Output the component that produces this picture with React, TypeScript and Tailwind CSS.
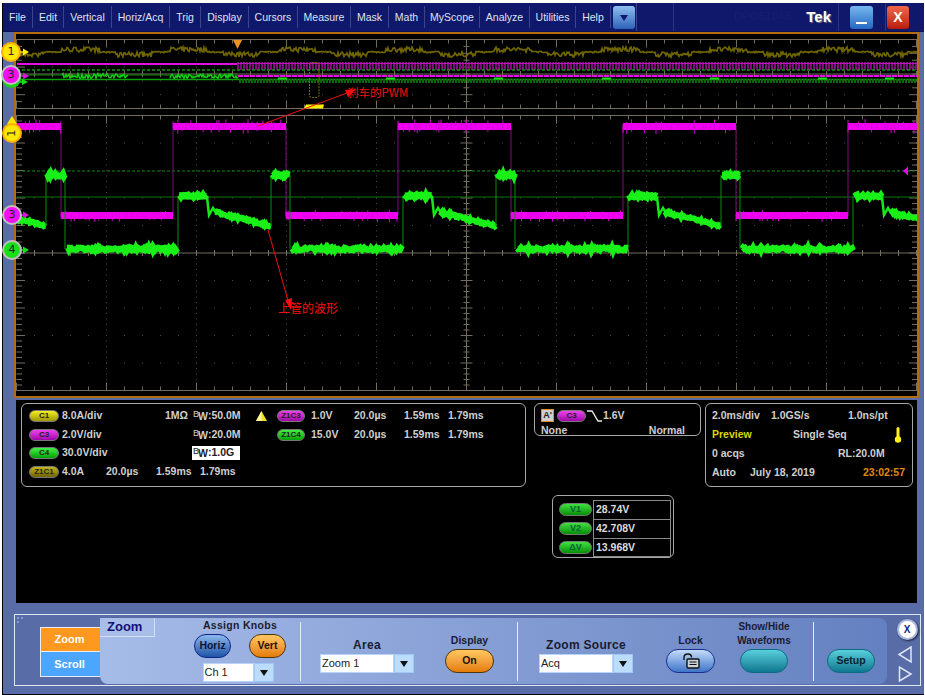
import React from 'react';

let seed = 7;
const rnd = () => {
  seed = (seed * 16807) % 2147483647;
  return seed / 2147483647;
};

const menuItems = [
  { label: 'File', w: 'w-[30px]' },
  { label: 'Edit', w: 'w-[31px]' },
  { label: 'Vertical', w: 'w-[48px]' },
  { label: 'Horiz/Acq', w: 'w-[58px]' },
  { label: 'Trig', w: 'w-[31px]' },
  { label: 'Display', w: 'w-[48px]' },
  { label: 'Cursors', w: 'w-[49px]' },
  { label: 'Measure', w: 'w-[53px]' },
  { label: 'Mask', w: 'w-[38px]' },
  { label: 'Math', w: 'w-[36px]' },
  { label: 'MyScope', w: 'w-[55px]' },
  { label: 'Analyze', w: 'w-[50px]' },
  { label: 'Utilities', w: 'w-[46px]' },
  { label: 'Help', w: 'w-[35px]' },
];

function range(from: number, to: number, step: number): number[] {
  const out: number[] = [];
  for (let v = from; v <= to + 0.01; v += step) out.push(v);
  return out;
}

// one graticule: frame lines, edge ticks, centre ticks, dots
function graticule(top: number, bottom: number, sub: number, every: number) {
  const cy = (top + bottom) / 2;
  const cx = 466.5;
  let d = `M17 ${top}H917M17 ${bottom}H917M17 ${cy}H917M${cx} ${top}V${bottom}`;
  let dots = '';
  const rows = range(top, bottom, sub * every).slice(1, -1);
  range(16.5, 917, 18).forEach((x, i) => {
    const major = i % 5 === 0;
    const len = major ? 8 : 4;
    d += `M${x} ${top}v${len}M${x} ${bottom}v-${len}`;
    d += `M${x} ${cy - 3}v6`;
    rows.forEach((y) => {
      dots += `M${x} ${y - 0.5}v1`;
    });
    if (major) range(top, bottom, sub).forEach((y) => (dots += `M${x} ${y - 0.5}v1`));
  });
  range(top, bottom, sub).forEach((y, i) => {
    const major = i % every === 0;
    const len = major ? 8 : 5;
    d += `M17 ${y}h${len}M917 ${y}h-${len}`;
    const half = major ? 6 : 3;
    d += `M${cx - half} ${y}h${half * 2}`;
  });
  return { d, dots };
}

function band(x0: number, y0: number, x1: number, y1: number, amp: number, step = 1): string {
  let d = '';
  const n = Math.round((x1 - x0) / step);
  for (let i = 0; i <= n; i++) {
    const t = i / n;
    const y = y0 + (y1 - y0) * t + (rnd() - 0.5) * amp;
    d += `${i ? 'L' : 'M'}${(x0 + (x1 - x0) * t).toFixed(1)} ${y.toFixed(1)}`;
  }
  return d;
}

function yellowTrace(): string {
  let d = 'M17 52';
  for (let x = 18; x <= 917; x += 1) {
    const p = ((x - 8) % 108 + 108) % 108;
    let y = 52 + (rnd() - 0.5) * 1.2;
    if (p >= 54 && p < 92) y = 52 - rnd() * 5;
    if (p < 36) y = 52 + rnd() * 5;
    d += `L${x.toFixed(1)} ${y.toFixed(1)}`;
  }
  return d;
}

function comb(x0: number, x1: number, y0: number, y1: number, step: number): string {
  return range(x0, x1, step)
    .map((x) => `M${x} ${y0}V${y1}`)
    .join('');
}

function spikes(x0: number, x1: number, y: number, up: number, down: number): string {
  let d = '';
  for (let x = x0; x < x1; x += 2 + rnd() * 5) {
    d += `M${x.toFixed(1)} ${y - rnd() * up}V${y + rnd() * down}`;
  }
  return d;
}

function Waveforms() {
  const main = graticule(115.5, 390.5, 5.5, 5);
  const over = graticule(39.5, 108.5, 6.9, 2);
  const periods = [-225, 0, 225, 450, 675];
  return (
    <svg viewBox="16 34 901 362" className="block w-[901px] h-[362px] bg-black">
      <path d={main.dots} stroke="#4a473c" strokeWidth="1" fill="none" />
      <path d={over.dots} stroke="#4a473c" strokeWidth="1" fill="none" />
      <path d={main.d} stroke="#736d5e" strokeWidth="1" fill="none" />
      <path d={over.d} stroke="#736d5e" strokeWidth="1" fill="none" />

      {/* overview traces */}
      <path d={yellowTrace()} stroke="#6f6500" strokeWidth="1.7" fill="none" />
      <path d="M17 64H238" stroke="#e010e0" strokeWidth="2" />
      <path d={comb(238, 917, 62, 70, 3)} stroke="#7a107a" strokeWidth="2" />
      <path d="M238 63.5H917" stroke="#c010c0" strokeWidth="1" />
      <path d="M17 70H917" stroke="#0a9a0a" strokeWidth="1.5" strokeDasharray="3 2" />
      <path d="M17 75H238" stroke="#0a8a0a" strokeWidth="1" />
      <path d="M238 76H917" stroke="#e010e0" strokeWidth="2" strokeDasharray="5 1" />
      <path d="M17 79.5H917" stroke="#0aa00a" strokeWidth="1.5" />
      <path d={band(62, 76, 128, 76, 5)} stroke="#14d014" strokeWidth="1.4" fill="none" />
      <path d={band(170, 76, 238, 76, 5)} stroke="#14d014" strokeWidth="1.4" fill="none" />
      <path d={comb(240, 917, 79, 83, 3)} stroke="#0a6a0a" strokeWidth="2" />
      {[278, 386, 494, 602, 710, 818, 885].map((x) => (
        <path key={x} d={`M${x} 78.5h9`} stroke="#18e018" strokeWidth="2" />
      ))}

      {/* zoom box and markers */}
      <rect x="309.5" y="62.5" width="9.5" height="35" rx="2" fill="none" stroke="#7a7000" strokeWidth="1" strokeDasharray="2 1" />
      <path d="M306 104.5H324L323 108.5H304Z" fill="#ffee00" />
      <path d="M233 40H242L237.5 49Z" fill="#f09020" />

      {/* reference lines */}
      <path d="M17 171H917" stroke="#0b8a0b" strokeWidth="1" strokeDasharray="3 2" />
      <path d="M17 197H917" stroke="#0a780a" strokeWidth="1.2" />

      {/* main traces */}
      {[-225, 0, 225, 450, 675, 900].map((o) => (
        <g key={o}>
          <path d={`M${o - 52} 126V216M${o + 61} 126V216`} stroke="#7c107c" strokeWidth="1" />
          <rect x={o - 52} y="123" width="113" height="7" fill="#f000f0" />
          <path d={spikes(o - 52, o + 61, 126, 7, 8)} stroke="#d800d8" strokeWidth="1" />
        </g>
      ))}
      {[-225, 0, 225, 450, 675].map((o) => (
        <g key={o}>
          <rect x={o + 61} y="212" width="112" height="7" fill="#f000f0" />
          <path d={spikes(o + 61, o + 173, 216, 6, 6)} stroke="#e000e0" strokeWidth="1" />
        </g>
      ))}
      {periods.map((o) => (
        <g key={o} fill="none">
          <path d={`M${o + 46} 226V175M${o + 65} 175V249M${o + 178} 249V196`} stroke="#0a8f0a" strokeWidth="1" />
          <path d={band(o + 47, 175, o + 65, 175, 3)} stroke="#18f018" strokeWidth="6" />
          <path d={band(o + 67, 249, o + 178, 249, 3)} stroke="#18f018" strokeWidth="6" />
          <path d={band(o + 179, 196, o + 207, 196, 3)} stroke="#18f018" strokeWidth="6" />
          <path d={`M${o + 207} 197L${o + 209} 215L${o + 213} 208L${o + 216} 213`} stroke="#18e818" strokeWidth="2.5" />
          <path d={band(o + 215, 212, o + 271, 226, 2.5)} stroke="#18f018" strokeWidth="5.5" />
        </g>
      ))}
      <path d="M903 171L908 166.5V175.5Z" fill="#e010e0" />

      {/* channel arrows */}
      <path d="M17 52h7" stroke="#ffee00" strokeWidth="1.5" />
      <path d="M23 48.5L29 52L23 55.5Z" fill="#ffee00" />
      <path d="M17 76h7" stroke="#e010e0" strokeWidth="1.5" />
      <path d="M23 72.5L29 76L23 79.5Z" fill="#e010e0" />
      <path d="M17 82h5" stroke="#18e018" strokeWidth="1.5" />
      <path d="M22 79L28 82L22 85Z" fill="#18e018" />
      <path d="M17 215h7" stroke="#e010e0" strokeWidth="1.5" />
      <path d="M23 211.5L29 215L23 218.5Z" fill="#e010e0" />
      <path d="M17 250h7" stroke="#18e018" strokeWidth="1.5" />
      <path d="M23 246.5L29 250L23 253.5Z" fill="#18e018" />

      {/* annotations */}
      <path d="M258 126L347 93" stroke="#f01010" strokeWidth="1" />
      <path d="M356 89L345 90L348 97Z" fill="#f01010" />
      <path d="M268 230L289 304" stroke="#f01010" strokeWidth="1" />
      <path d="M291 310L285 300L292 298Z" fill="#f01010" />
    </svg>
  );
}

function MenuBar() {
  return (
    <div className="h-[29px] bg-[#10186c] flex items-stretch border-b border-[#0a1050]">
      {menuItems.map((m) => (
        <div
          key={m.label}
          className={`${m.w} flex items-center justify-center pt-[1px] text-[10.5px] text-[#dfe3ef] border-r border-[#3a4488] my-[3px]`}
        >
          {m.label}
        </div>
      ))}
      <div className="ml-[2px] mt-[3px] w-[22px] h-[23px] rounded-[3px] bg-linear-to-b from-[#8fc0f0] to-[#2f62b8] flex items-center justify-center">
        <div className="w-0 h-0 border-x-[4px] border-x-transparent border-t-[6px] border-t-[#10186c]" />
      </div>
      <div className="ml-[1px] w-px bg-[#3a4488]" />
      <div className="w-[37px] border-r border-[#2a3480]" />
      <div className="w-[164px] flex items-center pl-[60px] relative">
        <span className="text-[11.5px] text-[#161e70]">DPO5104B</span>
        <span className="absolute right-[7px] text-[15px] font-bold text-white [text-shadow:1px_1px_1px_#7a7a7a]">Tek</span>
      </div>
      <div className="w-px bg-[#2a3480]" />
      <div className="ml-[11px] mt-[3px] w-[23px] h-[23px] rounded-[3px] bg-linear-to-b from-[#78b8f0] to-[#2468c0] flex items-end justify-center pb-[5px]">
        <div className="w-[11px] h-[2px] bg-white" />
      </div>
      <div className="ml-[12px] w-px bg-[#2a3480]" />
      <div className="ml-[1px] mt-[3px] w-[22px] h-[23px] rounded-[3px] bg-linear-to-b from-[#f06848] to-[#b81808] flex items-center justify-center text-[14px] font-bold text-white">
        X
      </div>
    </div>
  );
}

function ChPill({ label, tone, w = 'w-[30px]' }: { label: string; tone: 'y' | 'm' | 'g' | 'oy'; w?: string }) {
  const tones = {
    y: 'from-[#f4f020] to-[#a09800]',
    m: 'from-[#f040f0] to-[#a000a8]',
    g: 'from-[#40f040] to-[#00a000]',
    oy: 'from-[#c8b818] to-[#6c6200]',
  };
  return (
    <span className={`${w} h-[12px] shrink-0 rounded-full bg-linear-to-b ${tones[tone]} border border-[#777] flex items-center justify-center text-[8px] font-bold text-[#222]`}>
      {label}
    </span>
  );
}

function BW({ value }: { value: string }) {
  return (
    <span className="inline-flex items-baseline">
      <span className="text-[9px] font-normal relative -top-[2px]">B</span>
      <span className="relative top-[1px] -ml-[1px]">W</span>
      <span>:{value}</span>
    </span>
  );
}

function ChannelPanel() {
  return (
    <div className="w-[505px] h-[84px] border border-[#a8a8a8] rounded-md pl-[7px] pt-[2px] text-[10.5px] font-bold text-[#cfcfcf]">
      <div className="flex items-center h-[19px]">
        <ChPill label="C1" tone="y" />
        <span className="ml-[3px] w-[103px]">8.0A/div</span>
        <span className="w-[28px]">1MΩ</span>
        <span className="w-[63px]"><BW value="50.0M" /></span>
        <svg width="11" height="10" viewBox="0 0 11 10" className="block">
          <path d="M5.5 0L11 10H0Z" fill="#f0e020" />
          <path d="M5.5 0L5.5 10H0Z" fill="#fff8a0" />
        </svg>
        <span className="ml-[10px]"><ChPill label="Z1C3" tone="m" w="w-[28px]" /></span>
        <span className="ml-[6px] w-[43px]">1.0V</span>
        <span className="w-[50px]">20.0µs</span>
        <span className="w-[44px]">1.59ms</span>
        <span>1.79ms</span>
      </div>
      <div className="flex items-center h-[19px]">
        <ChPill label="C3" tone="m" />
        <span className="ml-[3px] w-[131px]">2.0V/div</span>
        <span className="w-[84px]"><BW value="20.0M" /></span>
        <ChPill label="Z1C4" tone="g" w="w-[28px]" />
        <span className="ml-[6px] w-[43px]">15.0V</span>
        <span className="w-[50px]">20.0µs</span>
        <span className="w-[44px]">1.59ms</span>
        <span>1.79ms</span>
      </div>
      <div className="flex items-center h-[18px]">
        <ChPill label="C4" tone="g" />
        <span className="ml-[3px] w-[130px]">30.0V/div</span>
        <span className="w-[48px] h-[14px] bg-white text-[#222] flex items-center pl-[1px]"><BW value="1.0G" /></span>
      </div>
      <div className="flex items-center h-[19px]">
        <ChPill label="Z1C1" tone="oy" />
        <span className="ml-[3px] w-[44px]">4.0A</span>
        <span className="w-[50px]">20.0µs</span>
        <span className="w-[44px]">1.59ms</span>
        <span>1.79ms</span>
      </div>
    </div>
  );
}

function TriggerPanel() {
  return (
    <div className="w-[167px] h-[33px] border border-[#a8a8a8] rounded-md px-[6px] text-[10.5px] font-bold text-[#cfcfcf]">
      <div className="flex items-center h-[17px] mt-[3px]">
        <span className="w-[13px] h-[13px] bg-[#cfcfcf] border border-[#e08a20] text-[#222] text-[9px] flex items-center justify-center">A'</span>
        <span className="ml-[3px]"><ChPill label="C3" tone="m" w="w-[29px]" /></span>
        <svg width="15" height="12" viewBox="0 0 15 12" className="ml-[1px] block">
          <path d="M0 1H5L11 11H15" stroke="#e8e8e8" strokeWidth="1.4" fill="none" />
        </svg>
        <span className="ml-[1px]">1.6V</span>
      </div>
      <div className="flex justify-between pr-[9px] mt-[1px] h-[11px] items-center">
        <span>None</span>
        <span>Normal</span>
      </div>
    </div>
  );
}

function AcqPanel() {
  return (
    <div className="ml-[4px] w-[208px] h-[84px] border border-[#a8a8a8] rounded-md pl-[6px] pt-[2px] text-[10.5px] font-bold text-[#cfcfcf]">
      <div className="flex items-center h-[19px]">
        <span className="w-[59px]">2.0ms/div</span>
        <span className="w-[77px]">1.0GS/s</span>
        <span>1.0ns/pt</span>
      </div>
      <div className="flex items-center h-[19px]">
        <span className="w-[81px] text-[#d8d800]">Preview</span>
        <span className="w-[101px]">Single Seq</span>
        <svg width="8" height="16" viewBox="0 0 8 16" className="block">
          <rect x="2.5" y="0" width="3" height="12" rx="1.5" fill="#ffee20" />
          <circle cx="4" cy="12.5" r="3.2" fill="#ffee20" />
        </svg>
      </div>
      <div className="flex items-center h-[19px]">
        <span className="w-[126px]">0 acqs</span>
        <span>RL:20.0M</span>
      </div>
      <div className="flex items-center h-[19px]">
        <span className="w-[38px]">Auto</span>
        <span className="w-[113px]">July 18, 2019</span>
        <span className="text-[#e08a10]">23:02:57</span>
      </div>
    </div>
  );
}

function CursorPanel() {
  const rows = [
    { label: 'V1', value: '28.74V' },
    { label: 'V2', value: '42.708V' },
    { label: 'ΔV', value: '13.968V' },
  ];
  return (
    <div className="ml-[18px] mt-[59px] w-[122px] h-[63px] border border-[#a8a8a8] rounded-md pl-[6px] pt-[4px] text-[10.5px] font-bold text-[#dcdcdc]">
      {rows.map((r, i) => (
        <div key={r.label} className="flex items-stretch h-[19px]">
          <div className="w-[34px] flex items-center">
            <span className="w-[33px] h-[13px] rounded-full bg-linear-to-b from-[#40e040] to-[#009000] border border-[#777] flex items-center justify-center text-[9px] text-[#063]">
              {r.label}
            </span>
          </div>
          <div className={`w-[78px] border border-[#8a8a8a] pl-[2px] flex items-center ${i === 2 ? 'border-b' : 'border-b-0'}`}>{r.value}</div>
        </div>
      ))}
    </div>
  );
}

function Dropdown({ value, inputW }: { value: string; inputW: string }) {
  return (
    <div className="flex h-[19px]">
      <div className={`${inputW} bg-white border border-[#b8d4f8] text-[11px] text-[#222] flex items-center pl-[1px]`}>{value}</div>
      <div className="w-[20px] bg-[#bcdcfc] border border-[#a0c8f4] flex items-center justify-center">
        <div className="w-0 h-0 border-x-[4px] border-x-transparent border-t-[6px] border-t-[#111]" />
      </div>
    </div>
  );
}

function Btn({ className, children }: { className: string; children?: React.ReactNode }) {
  return (
    <div className={`rounded-full border bg-linear-to-b flex items-center justify-center text-[10.5px] font-bold ${className}`}>
      {children}
    </div>
  );
}

const sepCls = 'w-px h-[59px] bg-[#e6ecf8] self-start mt-[4px]';
const labelCls = 'text-[12px] font-bold tracking-[0.3px] text-[#1a1c30] whitespace-nowrap';
const smallLabelCls = 'text-[10.5px] font-bold text-[#1a1c30] whitespace-nowrap leading-[14px]';
const tinyLabelCls = 'text-[10px] font-bold text-[#1a1c30] whitespace-nowrap leading-[14px]';
const tealCls = 'w-[48px] h-[24px] border-[#0e6a80] from-[#58d0dc] to-[#0a7890] text-[#0c2030]';

function ControlPanel() {
  return (
    <div className="ml-[11px] mt-[11px] w-[907px] h-[72px] border border-[#e0e8f6] flex relative">
      <div className="absolute left-[2px] top-[2px] grid grid-cols-2 gap-[2px]">
        <div className="w-[2px] h-[2px] bg-[#8a9ccc]" />
        <div className="w-[2px] h-[2px] bg-[#8a9ccc]" />
        <div className="w-[2px] h-[2px] bg-[#8a9ccc]" />
      </div>
      <div className="ml-[25px] mt-[12px] w-[60px] h-[50px] text-[11px] font-bold text-white flex flex-col">
        <div className="h-[25px] bg-[#ff981e] border border-[#e8eef8] border-r-0 flex items-center justify-center pr-[2px]">Zoom</div>
        <div className="h-[25px] bg-[#4ca6ff] border border-t-0 border-[#e8eef8] border-r-0 flex items-center justify-center pr-[2px]">Scroll</div>
      </div>
      <div className="mt-[3px] w-[787px] h-[66px] rounded-r-lg rounded-bl-lg bg-linear-to-r from-[#a6bce8] to-[#6580c0] flex items-end pb-[11px]">
        <div className="self-start h-[19px] w-[55px] bg-[#a8bee8] border-r border-b border-[#d4e0f6] rounded-tl-lg text-[13px] font-bold text-[#10107a] flex items-center pl-[7px]">
          Zoom
        </div>
        <div className="ml-[25px] w-[120px] self-start flex flex-col items-center">
          <div className="text-[10.5px] font-bold tracking-[0.3px] text-[#1a1c30] leading-[14px]">Assign Knobs</div>
          <div className="flex gap-[18px] mt-[2px]">
            <Btn className="w-[37px] h-[24px] border-[#12208a] from-[#8cb8ec] to-[#1f54a8] text-[#0c1438]">Horiz</Btn>
            <Btn className="w-[37px] h-[24px] border-[#503410] from-[#ffc860] to-[#e47c00] text-[#201408]">Vert</Btn>
          </div>
          <div className="mt-[5px] mr-[4px]">
            <Dropdown value="Ch 1" inputW="w-[51px]" />
          </div>
        </div>
        <div className={sepCls} />

        <div className="ml-[19px] w-[94px] flex flex-col items-center">
          <div className={labelCls}>Area</div>
          <Dropdown value="Zoom 1" inputW="w-[74px]" />
        </div>
        <div className="ml-[31px] w-[49px] flex flex-col items-center">
          <div className={smallLabelCls}>Display</div>
          <Btn className="mt-[2px] w-[49px] h-[24px] border-[#503410] from-[#ffc860] to-[#e47c00] text-[#201408]">On</Btn>
        </div>
        <div className={`ml-[23px] ${sepCls}`} />

        <div className="ml-[21px] w-[94px] flex flex-col items-center">
          <div className={labelCls}>Zoom Source</div>
          <Dropdown value="Acq" inputW="w-[74px]" />
        </div>
        <div className="ml-[33px] w-[49px] flex flex-col items-center">
          <div className={smallLabelCls}>Lock</div>
          <Btn className="mt-[2px] w-[49px] h-[24px] border-[#1a2e90] from-[#c4dcf8] to-[#3f74c8]">
            <svg width="20" height="16" viewBox="0 0 20 16" fill="none">
              <path d="M3 7V4.5C3 2 5 1 7 1C9 1 10.5 2 10.5 4.5" stroke="#111" strokeWidth="1.4" />
              <rect x="6" y="6" width="12" height="9" rx="1" fill="#c8d0d8" stroke="#111" strokeWidth="1.4" />
              <path d="M8.5 9H15.5M8.5 11.5H15.5" stroke="#111" strokeWidth="1" />
            </svg>
          </Btn>
        </div>
        <div className="ml-[25px] w-[48px] flex flex-col items-center">
          <div className={tinyLabelCls}>Show/Hide</div>
          <div className={tinyLabelCls}>Waveforms</div>
          <Btn className={`mt-[1px] ${tealCls}`} />
        </div>
        <div className={`ml-[25px] ${sepCls}`} />
        <div className="ml-[13px]">
          <Btn className={tealCls}>Setup</Btn>
        </div>
      </div>
      <div className="w-[32px] flex flex-col items-center pl-[8px] pt-[4px]">
        <div className="w-[21px] h-[21px] rounded-full bg-white border-2 border-[#a8b8e0] shadow-[1px_1px_2px_#223] flex items-center justify-center text-[10px] font-bold text-[#181e80]">
          X
        </div>
        <svg width="16" height="36" viewBox="0 0 16 36" className="mt-[6px] -ml-[4px] block" fill="none" stroke="#dfe6f6" strokeWidth="1.5">
          <path d="M14 1V16L2 8.5Z" />
          <path d="M2.5 21V35L14 28Z" />
        </svg>
      </div>
    </div>
  );
}

function Knob({ className, text, textCls = '' }: { className: string; text: string; textCls?: string }) {
  return (
    <div className={`absolute w-[20px] h-[20px] rounded-full flex items-center justify-center text-[11px] font-['DejaVu_Sans',sans-serif] text-[#222] ${className}`}>
      <span className={textCls}>{text}</span>
    </div>
  );
}

export default function App() {
  const cjk = "font-['Noto_Sans_CJK_SC','Liberation_Sans',sans-serif]";
  return (
    <div className="relative w-[925px] h-[695px] bg-white pt-[3px] pl-[2px] font-['Liberation_Sans',sans-serif] overflow-hidden">
      <div className="w-[922px] h-[692px] border-l border-b border-black bg-[#586ca8] flex flex-col">
        <MenuBar />
        <div className="ml-[11px] w-[905px] h-[366px] border-2 border-[#b46c10]">
          <Waveforms />
        </div>
        <div className="ml-[13px] mt-[2px] w-[901px] h-[203px] bg-black flex pl-[5px] pt-[3px] items-start">
          <ChannelPanel />
          <div className="ml-[8px] flex flex-col">
            <TriggerPanel />
            <CursorPanel />
          </div>
          <AcqPanel />
        </div>
        <ControlPanel />
      </div>

      <Knob className="left-[1px] top-[42px] bg-[#ffe800] border-2 border-[#ffb000]" text="1" />
      <div className="absolute left-[2px] top-[68px] w-[19px] h-[20px] rounded-full bg-[#18d018]" />
      <Knob className="left-[1px] top-[65px] bg-[#f010f0] border-2 border-[#c0c0c0]" text="3" />
      <div className="absolute left-[7px] top-[116px] w-0 h-0 border-x-[5px] border-x-transparent border-b-[8px] border-b-[#ffe800]" />
      <Knob className="left-[2px] top-[123px] bg-[#ffe800] border-2 border-[#ffb000]" text="1" textCls="-rotate-90" />
      <Knob className="left-[2px] top-[205px] bg-[#f010f0] border-2 border-[#c0c0c0]" text="3" />
      <Knob className="left-[2px] top-[240px] bg-[#18e018] border-2 border-[#c0c0c0]" text="4" />

      <div className={`absolute left-[347px] top-[85px] text-[11.5px] leading-[14px] text-[#f81010] ${cjk}`}>刹车的PWM</div>
      <div className={`absolute left-[278px] top-[301px] text-[12px] leading-[14px] text-[#f81010] ${cjk}`}>上管的波形</div>
    </div>
  );
}
